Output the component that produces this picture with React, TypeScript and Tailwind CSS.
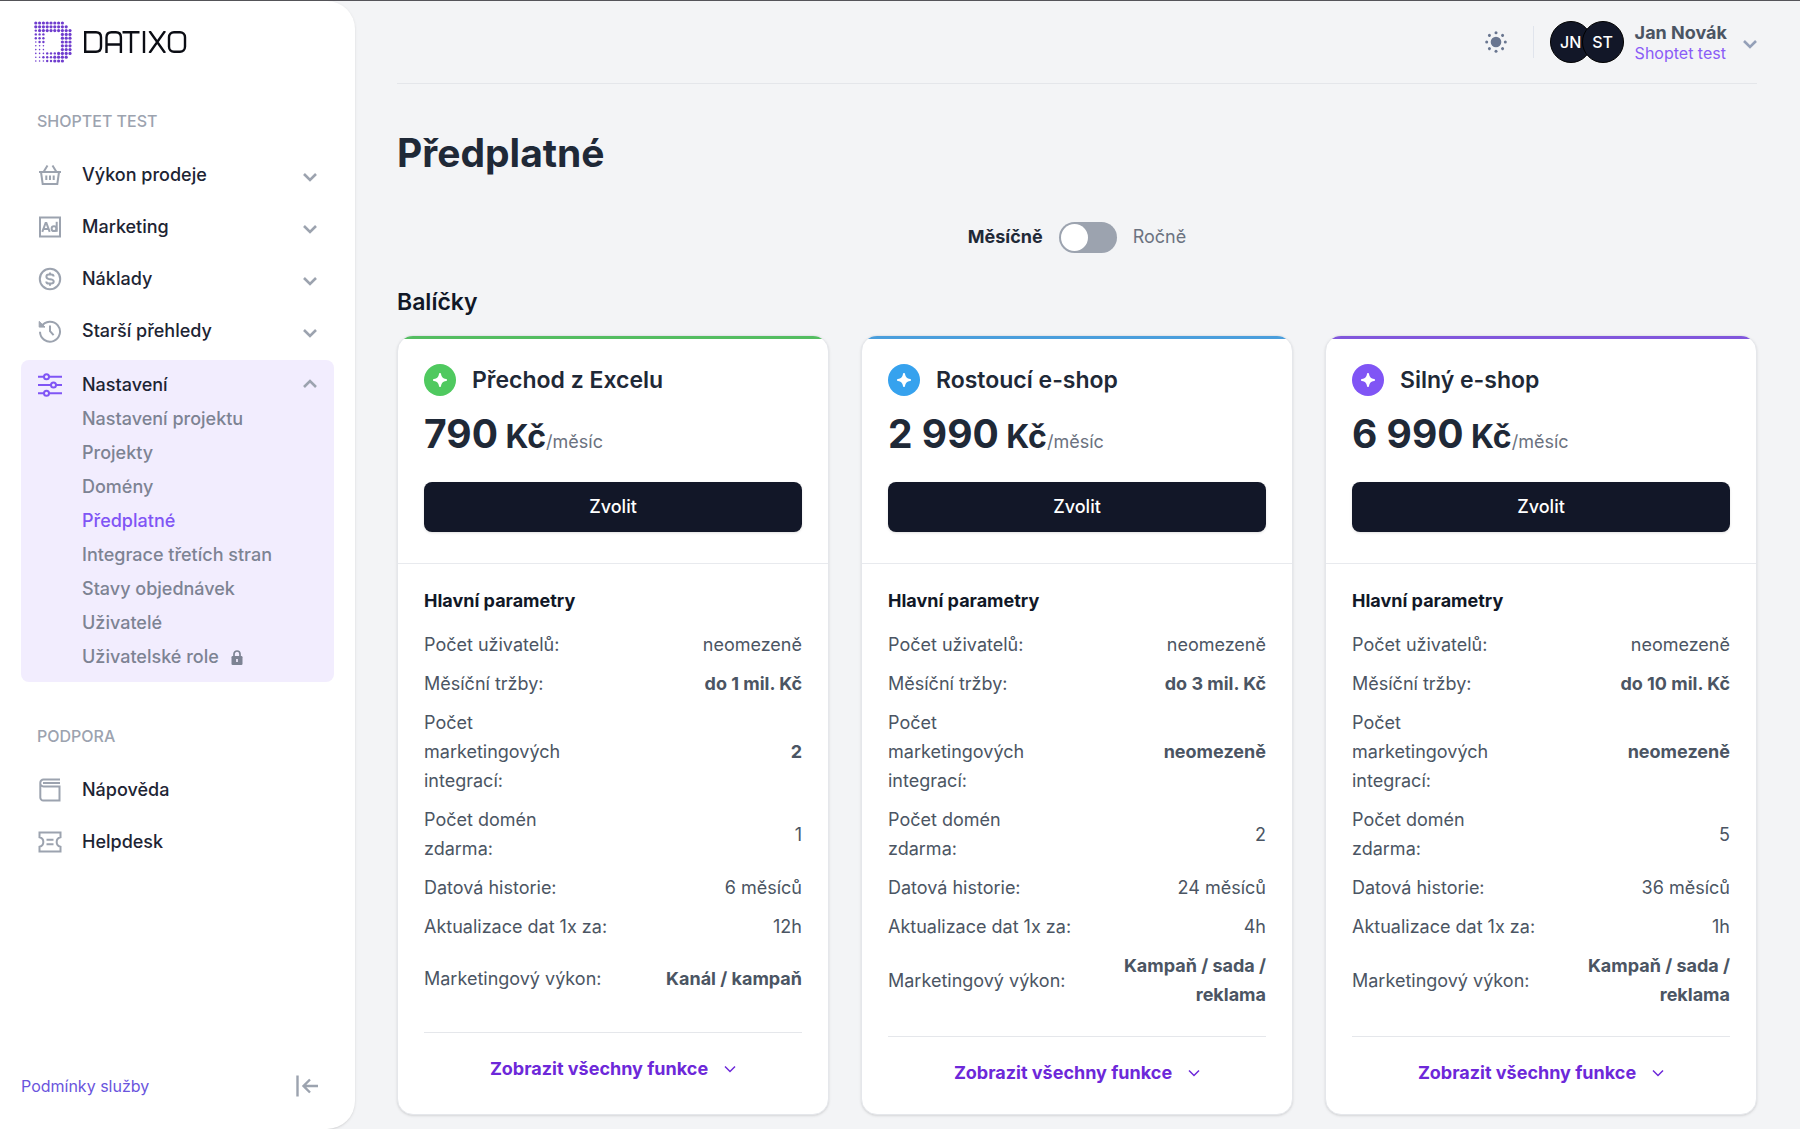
import { useState } from 'react';
import clsx from 'clsx';

interface Plan {
  id: string;
  name: string;
  price: string;
  bar: string;
  badge: string;
  params: Param[];
}

interface Param {
  label: string;
  value: string;
  strong?: boolean;
}

const buildParams = (
  revenue: string,
  integrations: string,
  domains: string,
  history: string,
  refresh: string,
  performance: string
): Param[] => [
  { label: 'Počet uživatelů:', value: 'neomezeně' },
  { label: 'Měsíční tržby:', value: revenue, strong: true },
  { label: 'Počet marketingových integrací:', value: integrations, strong: true },
  { label: 'Počet domén zdarma:', value: domains },
  { label: 'Datová historie:', value: history },
  { label: 'Aktualizace dat 1x za:', value: refresh },
  { label: 'Marketingový výkon:', value: performance, strong: true },
];

const plans: Plan[] = [
  {
    id: 'excel',
    name: 'Přechod z Excelu',
    price: '790',
    bar: 'bg-[#54bd61]',
    badge: 'bg-[#4fc95f]',
    params: buildParams('do 1 mil. Kč', '2', '1', '6 měsíců', '12h', 'Kanál / kampaň'),
  },
  {
    id: 'growing',
    name: 'Rostoucí e-shop',
    price: '2 990',
    bar: 'bg-[#4a9edc]',
    badge: 'bg-[#36a2ee]',
    params: buildParams('do 3 mil. Kč', 'neomezeně', '2', '24 měsíců', '4h', 'Kampaň / sada / reklama'),
  },
  {
    id: 'strong',
    name: 'Silný e-shop',
    price: '6 990',
    bar: 'bg-[#8157dc]',
    badge: 'bg-[#8055f5]',
    params: buildParams('do 10 mil. Kč', 'neomezeně', '5', '36 měsíců', '1h', 'Kampaň / sada / reklama'),
  },
];

const settingsLinks = [
  'Nastavení projektu',
  'Projekty',
  'Domény',
  'Předplatné',
  'Integrace třetích stran',
  'Stavy objednávek',
  'Uživatelé',
  'Uživatelské role',
];

const Chevron = ({ up = false, className }: { up?: boolean; className?: string }) => (
  <svg viewBox="0 0 14 9" className={clsx('h-[9px] w-[14px]', className)} fill="none" stroke="currentColor" strokeWidth="2.6">
    <path d={up ? 'M1 8l6-6 6 6' : 'M1 1l6 6 6-6'} />
  </svg>
);

const iconProps = {
  viewBox: '0 0 24 24',
  className: 'h-6 w-6 shrink-0',
  fill: 'none',
  stroke: 'currentColor',
  strokeWidth: 2,
};

const BasketIcon = () => (
  <svg {...iconProps}>
    <path d="M1 9h22M3 9l1.7 12h14.6L21 9M5.5 9l4-6.500M18.500 9l-4-6.500M8.300 12.500v4.500M12 12.500v4.500M15.700 12.500v4.500" />
  </svg>
);

const AdIcon = () => (
  <svg {...iconProps}>
    <path d="M2 2.500h20v19H2z" />
    <path d="M4.300 16.800l3.300-8.800h.8l3.300 8.800M5.600 13.900h4.800" />
    <circle cx="16" cy="13.700" r="2.400" />
    <path d="M18.700 6.800v10" />
  </svg>
);

const DollarIcon = () => (
  <svg {...iconProps}>
    <circle cx="12" cy="12" r="10.200" />
    <path d="M15.600 9.600c0-1.400-1.200-2-2.400-2h-2.400c-1.400 0-2.400.9-2.400 2.100S9.400 11.600 10.600 11.900l2.800.5c1.300.3 2.300.9 2.300 2.100s-1 2-2.400 2h-2.600c-1.300 0-2.400-.8-2.400-2.100M12 5.400v2.200M12 16.500v2.300" />
  </svg>
);

const HistoryIcon = () => (
  <svg {...iconProps}>
    <path d="M3.500 7.400A10 10 0 1 1 2 12.800" />
    <path d="M1.200 2.400v5.700h5.800z" fill="currentColor" strokeWidth="1" />
    <path d="M12 6.500v5.700l3.600 4" />
  </svg>
);

const SlidersIcon = () => (
  <svg {...iconProps}>
    <path d="M0 3.800h6M11 3.800h13M0 12h13M18 12h6M0 20.200h6M11 20.200h13" />
    <circle cx="8.500" cy="3.800" r="2.500" />
    <circle cx="15.500" cy="12" r="2.500" />
    <circle cx="8.500" cy="20.200" r="2.500" />
  </svg>
);

const BookIcon = () => (
  <svg {...iconProps}>
    <path d="M22 1.500H5.500A3.200 3.200 0 0 0 2.300 4.700v14.800a3 3 0 0 0 3 3H21.500V8.500H5.500a3.200 3.200 0 0 1-3.200-3.600M5 5h17" />
  </svg>
);

const TicketIcon = () => (
  <svg {...iconProps}>
    <path d="M1.500 2.500h21v4.800a4.800 4.800 0 0 0 0 9.400v4.800h-21v-4.800a4.800 4.800 0 0 0 0-9.400zM8.500 9.800h7M8.500 14.200h7" />
  </svg>
);

const LockIcon = () => (
  <svg viewBox="0 0 12 15" className="h-[15px] w-3" fill="none">
    <path d="M3 7V4a3 3 0 0 1 6 0v3" stroke="currentColor" strokeWidth="1.700" />
    <rect x="0.500" y="6" width="11" height="9" rx="1.200" fill="currentColor" />
    <path d="M6 9v3" stroke="#f2edfe" strokeWidth="1.700" />
  </svg>
);

const SunIcon = () => (
  <svg viewBox="0 0 22 22" className="h-[22px] w-[22px]" fill="#697690">
    <circle cx="11" cy="11" r="5.300" />
    {[0, 45, 90, 135, 180, 225, 270, 315].map((angle) => (
      <circle key={angle} cx="11" cy="1.700" r="1.500" transform={`rotate(${angle} 11 11)`} />
    ))}
  </svg>
);

// Halftone "D": dots outside of the letter are blank, the rest grow towards the top right
const logoRows = [
  '33333333..',
  '333333333.',
  '2333333333',
  '222....333',
  '222....333',
  '122....333',
  '111....333',
  '111....333',
  '1112223333',
  '112223333.',
  '11122333..',
];

const dotRadius: Record<string, number> = { '1': 0.8, '2': 1.2, '3': 1.6 };

const Logo = () => (
  <a href="#" aria-label="Datixo" className="flex items-center gap-3">
    <svg viewBox="0 0 38 42" className="h-[42px] w-[38px]" fill="#6f3dce">
      {logoRows.map((row, y) =>
        row.split('').map((dot, x) =>
          dot === '.' ? null : (
            <circle key={`${x}-${y}`} cx={1.8 + x * 3.8} cy={2 + y * 3.8} r={dotRadius[dot]} />
          )
        )
      )}
    </svg>
    <svg viewBox="0 0 103 22" className="h-[22px] w-[103px]" fill="none" stroke="#0b0d14" strokeWidth="2.400">
      <path d="M1.200 1.200H12q5 0 5 5v9.600q0 5-5 5H1.200z" />
      <path d="M22.500 22V6.200q0-5 5-5h4.400q5 0 5 5V22M22.500 13.500h14.400" />
      <path d="M38.500 1.200h17M47 1.200V22M60 0v22M65.500 0l15.500 22M81 0L65.500 22" />
      <rect x="85" y="1.200" width="16" height="19.600" rx="5" />
    </svg>
  </a>
);

const mainLinks = [
  { label: 'Výkon prodeje', Icon: BasketIcon },
  { label: 'Marketing', Icon: AdIcon },
  { label: 'Náklady', Icon: DollarIcon },
  { label: 'Starší přehledy', Icon: HistoryIcon },
];

const supportLinks = [
  { label: 'Nápověda', Icon: BookIcon },
  { label: 'Helpdesk', Icon: TicketIcon },
];

function Sidebar() {
  const [open, setOpen] = useState(true);

  return (
    <aside className="flex w-[355px] shrink-0 flex-col rounded-r-[28px] bg-white px-[21px] shadow-sm">
      <div className="flex h-[82px] items-center pl-[13px]">
        <Logo />
      </div>

      <nav className="text-lg font-medium text-[#1d2433]">
        <h2 className="mt-6 px-4 text-base leading-7 text-[#9ca3af]">SHOPTET TEST</h2>
        <ul className="mt-[14px]">
          {mainLinks.map(({ label, Icon }) => (
            <li key={label}>
              <button type="button" className="flex h-[52px] w-full items-center gap-5 px-[17px] text-[#9ca3af]">
                <Icon />
                <span className="flex-1 text-left text-[#1d2433]">{label}</span>
                <Chevron className="mt-1" />
              </button>
            </li>
          ))}
        </ul>

        <div className="mt-[3px] rounded-lg bg-[#f2edfe] py-2">
          <button
            type="button"
            onClick={() => setOpen(!open)}
            className="flex h-[34px] w-full items-center gap-5 px-[17px] text-[#8055f5]"
          >
            <SlidersIcon />
            <span className="flex-1 text-left text-[#1d2433]">Nastavení</span>
            <Chevron up={open} className="mb-1 text-[#9ca3af]" />
          </button>
          {open && (
            <ul className="pl-[61px]">
              {settingsLinks.map((label) => (
                <li key={label}>
                  <a
                    href="#"
                    className={clsx(
                      'flex h-[34px] items-center gap-3',
                      label === 'Předplatné' ? 'text-[#8055f5]' : 'text-[#7d8393]'
                    )}
                  >
                    {label}
                    {label === 'Uživatelské role' && <LockIcon />}
                  </a>
                </li>
              ))}
            </ul>
          )}
        </div>

        <h2 className="mt-10 px-4 text-base leading-7 text-[#9ca3af]">PODPORA</h2>
        <ul className="mt-[14px]">
          {supportLinks.map(({ label, Icon }) => (
            <li key={label}>
              <a href="#" className="flex h-[52px] items-center gap-5 px-[17px] text-[#9ca3af]">
                <Icon />
                <span className="text-[#1d2433]">{label}</span>
              </a>
            </li>
          ))}
        </ul>
      </nav>

      <div className="mt-auto flex items-center justify-between pr-4 pb-[31px]">
        <a href="#" className="text-base text-[#6a55dd]">Podmínky služby</a>
        <button type="button" aria-label="Sbalit menu">
          <svg viewBox="0 0 22 22" className="h-[22px] w-[22px]" fill="none" stroke="#9ca3af" strokeWidth="2.400">
            <path d="M1.500 0.500v21M22 11H8M14 4.500L7.500 11l6.500 6.500" />
          </svg>
        </button>
      </div>
    </aside>
  );
}

function Header() {
  return (
    <header className="flex h-[83px] items-center justify-end border-b border-[#e4e6ea]">
      <button type="button" aria-label="Přepnout motiv">
        <SunIcon />
      </button>
      <div className="ml-[26px] h-8 w-px bg-[#e0e4ec]" />
      <button type="button" className="ml-4 flex items-center text-left">
        <span className="flex text-base font-medium text-white">
          <span className="flex h-[42px] w-[42px] items-center justify-center rounded-full border border-black bg-[#121728]">JN</span>
          <span className="-ml-[10px] flex h-[42px] w-[42px] items-center justify-center rounded-full border border-black bg-[#121728]">ST</span>
        </span>
        <span className="ml-[11px] flex flex-col pt-[2px]">
          <span className="text-lg leading-[21px] font-bold text-[#4b5563]">Jan Novák</span>
          <span className="text-base leading-[21px] text-[#8a5cf6]">Shoptet test</span>
        </span>
        <Chevron className="mt-1 ml-4 text-[#94a0b8]" />
      </button>
    </header>
  );
}

function PlanCard({ plan }: { plan: Plan }) {
  return (
    <article className="flex flex-col overflow-hidden rounded-2xl border border-[#e5e7eb] bg-white shadow-sm">
      <div className={clsx('h-[3px]', plan.bar)} />
      <div className="border-b border-[#e8eaee] px-[26px] pt-[25px] pb-[31px]">
        <div className="flex items-center gap-4">
          <span className={clsx('flex h-8 w-8 items-center justify-center rounded-full', plan.badge)}>
            <svg viewBox="0 0 14 14" className="h-[14px] w-[14px]" fill="white">
              <path d="M7 0c.7 0 .9.500 1 1 .5 3 2 4.500 5 5 .5.100 1 .3 1 1s-.5.900-1 1c-3 .5-4.500 2-5 5-.1.500-.3 1-1 1s-.9-.5-1-1c-.5-3-2-4.500-5-5-.5-.1-1-.3-1-1s.5-.9 1-1c3-.5 4.500-2 5-5 .1-.5.300-1 1-1z" />
            </svg>
          </span>
          <h3 className="text-[23px] leading-8 font-semibold text-[#1f2937]">{plan.name}</h3>
        </div>
        <p className="mt-3 text-[39px] leading-[52px] font-bold text-[#1f2937]">
          {plan.price}
          <span className="text-[32px]"> Kč</span>
          <span className="text-lg font-normal text-[#6b7280]">/měsíc</span>
        </p>
        <button type="button" className="mt-[19px] h-[50px] w-full rounded-lg bg-[#121728] text-lg font-medium text-white shadow-sm">
          Zvolit
        </button>
      </div>

      <div className="px-[26px] pt-[22px] pb-[25px]">
        <h4 className="text-lg leading-[29px] font-bold text-[#111827]">Hlavní parametry</h4>
        <table className="mt-[10px] w-full table-fixed text-lg leading-[29px] text-[#4b5563]">
          <tbody>
            {plan.params.map((param) => (
              <tr key={param.label} className="last:h-16">
                <th scope="row" className="py-[5px] pr-[5px] text-left font-normal">{param.label}</th>
                <td className={clsx('py-[5px] text-right', param.strong && 'font-bold')}>{param.value}</td>
              </tr>
            ))}
          </tbody>
        </table>
        <div className="mt-[22px] border-t border-[#e5e7eb] pt-5 text-center">
          <button type="button" className="inline-flex items-center gap-4 text-lg leading-8 font-bold text-[#6d28d9]">
            Zobrazit všechny funkce
            <svg viewBox="0 0 12 8" className="h-2 w-3" fill="none" stroke="currentColor" strokeWidth="1.500">
              <path d="M1 1.500l5 5 5-5" />
            </svg>
          </button>
        </div>
      </div>
    </article>
  );
}

export default function App() {
  const [yearly, setYearly] = useState(false);

  return (
    <div className="flex min-h-screen border-t border-[#55545a] bg-[#f3f4f6] font-['Inter',sans-serif]">
      <Sidebar />
      <main className="min-w-0 flex-1 pr-[43px] pb-[14px] pl-[42px]">
        <Header />
        <h1 className="mt-[45px] text-[39px] leading-[48px] font-bold text-[#1f2937]">Předplatné</h1>

        <div className="mt-11 flex items-center justify-center gap-4 text-lg leading-8">
          <span className={clsx(yearly ? 'text-[#6b7280]' : 'font-bold text-[#1f2937]')}>Měsíčně</span>
          <label className="relative block h-[31px] w-[58px] rounded-full bg-[#9ca3af]">
            <input
              type="checkbox"
              role="switch"
              aria-label="Ročně"
              checked={yearly}
              onChange={(e) => setYearly(e.target.checked)}
              className="peer h-full w-full cursor-pointer appearance-none rounded-full"
            />
            <span className="pointer-events-none absolute top-[2px] left-[2px] h-[27px] w-[27px] rounded-full bg-white peer-checked:left-7" />
          </label>
          <span className={clsx(yearly ? 'font-bold text-[#1f2937]' : 'text-[#6b7280]')}>Ročně</span>
        </div>

        <h2 className="mt-[33px] text-[23px] leading-8 font-semibold text-[#111827]">Balíčky</h2>
        <section className="mt-[17px] grid grid-cols-3 gap-8">
          {plans.map((plan) => (
            <PlanCard key={plan.id} plan={plan} />
          ))}
        </section>
      </main>
    </div>
  );
}
